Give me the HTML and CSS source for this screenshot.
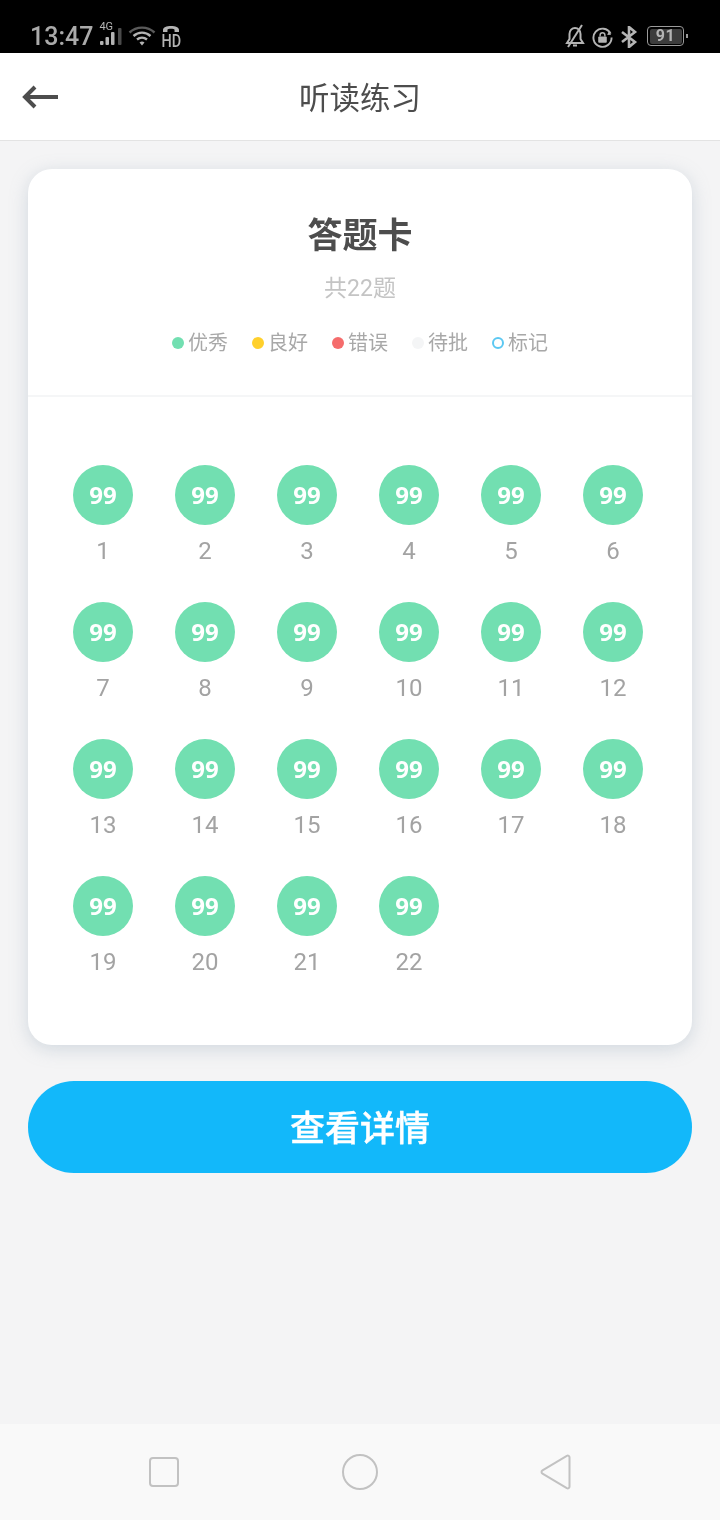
FILE: index.html
```html
<!DOCTYPE html>
<html lang="zh">
<head>
<meta charset="utf-8">
<title>听读练习</title>
<link rel="stylesheet" href="styles.css">
</head>
<body>
<div class="app">
  <div class="status">
    <div class="status-left">
      <span class="time">13:47</span>
      <span class="net">
        <span class="net-label">4G</span>
        <svg class="bars" width="24" height="17" viewBox="0 0 24 17"><g fill="#b4b4b4"><rect x="1" y="13" width="3.500" height="4" rx="1"/><rect x="6.500" y="9" width="3.500" height="8" rx="1"/><rect x="12" y="4" width="3.500" height="13" rx="1"/></g><rect x="19" y="0" width="3.500" height="17" rx="1" fill="#4a4a4a"/></svg>
      </span>
      <svg class="wifi" width="28" height="22" viewBox="0 0 28 22"><path d="M1.500 7.500C8.500 1 19.500 1 26.500 7.500" fill="none" stroke="#5a5a5a" stroke-width="2.400"/><path d="M5.500 11C10.500 6.500 17.500 6.500 22.500 11" fill="none" stroke="#b4b4b4" stroke-width="2.400"/><path d="M9 14.500C12 12 16 12 19 14.500" fill="none" stroke="#b4b4b4" stroke-width="2.400"/><path d="M11.500 17.500Q14 15.600 16.500 17.500L14 20.500Z" fill="#b4b4b4"/></svg>
      <span class="hd">
        <svg width="20" height="8" viewBox="0 0 20 9"><path d="M1 8V5.500C1 2.500 5 1 10 1s9 1.500 9 4.500V8h-5V5.500C14 4.500 12 4.200 10 4.200S6 4.500 6 5.500V8Z" fill="#b4b4b4"/></svg>
        <span class="hd-label">HD</span>
      </span>
    </div>
    <div class="status-right">
      <svg width="20" height="24" viewBox="1 0 20 24"><path d="M3 19h16l-2.500-4V10c0-3.500-2.500-6-5.500-6S5.500 6.500 5.500 10v5Z" fill="none" stroke="#b4b4b4" stroke-width="2"/><path d="M9 21.500h4" stroke="#b4b4b4" stroke-width="2"/><path d="M18 1 4 23" stroke="#b4b4b4" stroke-width="2"/></svg>
      <svg width="21" height="21" viewBox="0 0 22 22"><path d="M19.500 7A9.500 9.500 0 1 0 20.500 11" fill="none" stroke="#b4b4b4" stroke-width="2"/><path d="M17.500 4.500 20 8l-4 .5Z" fill="#b4b4b4"/><rect x="6.500" y="10" width="9" height="6.500" rx="1" fill="#b4b4b4"/><path d="M8.500 10V8.500a2.500 2.500 0 0 1 5 0V10" fill="none" stroke="#b4b4b4" stroke-width="1.500"/></svg>
      <svg width="18" height="22" viewBox="0 0 18 22"><path d="M2 6 15 16 9 21V1l6 5L2 16" fill="none" stroke="#b4b4b4" stroke-width="2.600"/></svg>
      <span class="battery"><span class="battery-level">91</span></span>
      <span class="battery-tip"></span>
    </div>
  </div>

  <header class="topbar">
    <svg class="back" width="38" height="26" viewBox="0 0 38 26"><path d="M37 13H4M14 3 4 13l10 10" fill="none" stroke="#4d4d4d" stroke-width="4"/></svg>
    <h1 class="page-title">听读练习</h1>
  </header>

  <main class="content">
    <section class="card">
      <div class="card-head">
        <h2 class="card-title">答题卡</h2>
        <p class="card-sub">共22题</p>
        <ul class="legend">
          <li class="legend-item"><i class="dot dot-green"></i>优秀</li>
          <li class="legend-item"><i class="dot dot-yellow"></i>良好</li>
          <li class="legend-item"><i class="dot dot-red"></i>错误</li>
          <li class="legend-item"><i class="dot dot-grey"></i>待批</li>
          <li class="legend-item"><i class="dot dot-ring"></i>标记</li>
        </ul>
      </div>
      <div class="grid">
        <div class="cell"><span class="score">99</span><span class="num">1</span></div>
        <div class="cell"><span class="score">99</span><span class="num">2</span></div>
        <div class="cell"><span class="score">99</span><span class="num">3</span></div>
        <div class="cell"><span class="score">99</span><span class="num">4</span></div>
        <div class="cell"><span class="score">99</span><span class="num">5</span></div>
        <div class="cell"><span class="score">99</span><span class="num">6</span></div>
        <div class="cell"><span class="score">99</span><span class="num">7</span></div>
        <div class="cell"><span class="score">99</span><span class="num">8</span></div>
        <div class="cell"><span class="score">99</span><span class="num">9</span></div>
        <div class="cell"><span class="score">99</span><span class="num">10</span></div>
        <div class="cell"><span class="score">99</span><span class="num">11</span></div>
        <div class="cell"><span class="score">99</span><span class="num">12</span></div>
        <div class="cell"><span class="score">99</span><span class="num">13</span></div>
        <div class="cell"><span class="score">99</span><span class="num">14</span></div>
        <div class="cell"><span class="score">99</span><span class="num">15</span></div>
        <div class="cell"><span class="score">99</span><span class="num">16</span></div>
        <div class="cell"><span class="score">99</span><span class="num">17</span></div>
        <div class="cell"><span class="score">99</span><span class="num">18</span></div>
        <div class="cell"><span class="score">99</span><span class="num">19</span></div>
        <div class="cell"><span class="score">99</span><span class="num">20</span></div>
        <div class="cell"><span class="score">99</span><span class="num">21</span></div>
        <div class="cell"><span class="score">99</span><span class="num">22</span></div>
      </div>
    </section>
    <button class="cta" type="button">查看详情</button>
  </main>

  <nav class="navbar">
    <svg width="32" height="32" viewBox="0 0 32 32"><rect x="2" y="2" width="28" height="28" rx="3" fill="none" stroke="#c2c2c2" stroke-width="2"/></svg>
    <svg width="38" height="38" viewBox="0 0 38 38"><circle cx="19" cy="19" r="17" fill="none" stroke="#c2c2c2" stroke-width="2"/></svg>
    <svg width="32" height="38" viewBox="0 0 32 38"><path d="M2.500 17.300 26.800 2.800c1.300-.7 2.700.2 2.700 1.500v29.400c0 1.300-1.400 2.200-2.700 1.500L2.500 20.700c-1.300-.8-1.300-2.600 0-3.400Z" fill="none" stroke="#c2c2c2" stroke-width="2"/></svg>
  </nav>
</div>
</body>
</html>
```

FILE: styles.css
```css
* { box-sizing: border-box; }
html, body { margin: 0; padding: 0; }
body {
  width: 720px;
  height: 1520px;
  overflow: hidden;
  background: #f4f4f5;
  font-family: "Roboto", "Noto Sans CJK SC", sans-serif;
}
h1, h2, p, ul { margin: 0; padding: 0; }
ul { list-style: none; }

.app { display: flex; flex-direction: column; height: 1520px; will-change: transform; }

.status {
  height: 53px;
  flex: none;
  background: #000;
  display: flex;
  justify-content: space-between;
  align-items: flex-end;
  padding: 0 32px 3px 30px;
  color: #b4b4b4;
}
.status-left, .status-right { display: flex; align-items: flex-end; }
.time { font-size: 25px; line-height: 30px; font-weight: 500; color: #aaa; margin-bottom: -2px; }
.net { position: relative; width: 24px; height: 24px; margin-left: 6px; margin-bottom: 5px; }
.net-label { position: absolute; left: 0; top: 0; font-size: 11px; line-height: 11px; color: #b4b4b4; }
.bars { position: absolute; left: 0; bottom: 0; }
.wifi { margin-left: 5px; margin-bottom: 3px; }
.hd { display: flex; flex-direction: column; align-items: center; margin-left: 4px; margin-bottom: 1px; width: 22px; }
.hd-label { font-size: 18px; line-height: 16px; font-weight: 500; transform: scaleX(0.8); }
.status-right { gap: 7px; margin-bottom: 2px; }
.status-right svg { flex: none; }
.battery {
  width: 37px; height: 20px; border: 1.500px solid #9a9a9a; border-radius: 4px;
  padding: 1.500px; margin-left: 2px; margin-bottom: 2px; display: flex;
}
.battery-level {
  flex: 1; background: #3c3c3c; border-radius: 2px; color: #b4b4b4;
  font-size: 16px; font-weight: 700; line-height: 14px; text-align: center;
  letter-spacing: 0.500px;
}
.battery-tip { width: 2px; height: 4px; background: #9a9a9a; margin-left: -5px; margin-bottom: 10px; }

.topbar {
  height: 88px;
  flex: none;
  background: #fff;
  border-bottom: 1px solid #e3e3e3;
  position: relative;
  display: flex;
  align-items: center;
  justify-content: center;
}
.back { position: absolute; left: 21px; top: 31px; }
.page-title { font-size: 30.500px; font-weight: 400; color: #4d4d4d; line-height: 44px; margin-top: 5px; }

.content { flex: 1; padding: 28px 28px 0; display: flex; flex-direction: column; }
.card {
  height: 876px;
  background: #fff;
  border-radius: 24px;
  box-shadow: 0 4px 18px rgba(140, 160, 180, 0.34);
}
.card-head {
  height: 228px;
  border-bottom: 2px solid #f5f6f7;
  display: flex;
  flex-direction: column;
  align-items: center;
  padding-top: 44px;
}
.card-title { font-size: 35px; line-height: 48px; font-weight: 700; color: #4d4d4d; }
.card-sub { font-size: 23px; line-height: 34px; color: #c4c4c4; margin-top: 11px; }
.legend { display: flex; gap: 24px; margin-top: 23px; }
.legend-item {
  display: flex; align-items: center; gap: 4px;
  font-size: 20px; line-height: 28px; color: #a8a8a8;
}
.dot { width: 12px; height: 12px; border-radius: 50%; display: block; }
.dot-green { background: #72dfb1; }
.dot-yellow { background: #ffd02c; }
.dot-red { background: #f56c6c; }
.dot-grey { background: #f4f5f6; }
.dot-ring { background: #fff; border: 2.500px solid #5cc8f2; }

.grid {
  display: grid;
  grid-template-columns: repeat(6, 102px);
  grid-auto-rows: 137px;
  padding: 68px 0 0 24px;
}
.cell { display: flex; flex-direction: column; align-items: center; }
.score {
  width: 60px; height: 60px; border-radius: 50%;
  background: #72dfb1; color: #fff;
  font-family: "Noto Sans", sans-serif;
  font-size: 24px; font-weight: 700; line-height: 60px; text-align: center;
}
.num { font-size: 24px; line-height: 32px; color: #a3a3a3; margin-top: 10px; }

.cta {
  margin-top: 36px;
  height: 92px;
  border: 0;
  border-radius: 46px;
  background: #12b8fa;
  color: #fff;
  font-family: "Noto Sans CJK SC", sans-serif;
  font-size: 35px;
  font-weight: 500;
  -webkit-text-stroke: 0.4px #fff;
  padding: 0 0 4px;
}

.navbar {
  height: 96px;
  flex: none;
  background: #f9f9f9;
  display: flex;
  align-items: center;
  justify-content: space-between;
  padding: 0 148px;
}
```
